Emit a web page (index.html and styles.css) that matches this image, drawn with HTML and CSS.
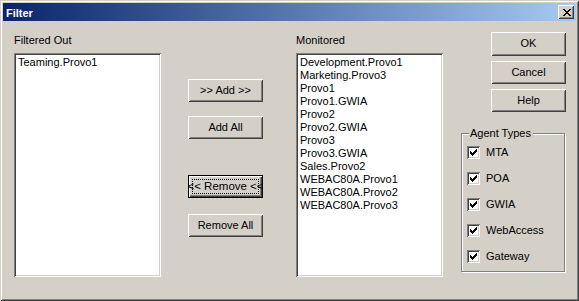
FILE: index.html
```html
<!DOCTYPE html>
<html>
<head>
<meta charset="utf-8">
<title>Filter</title>
<link rel="stylesheet" href="styles.css">
</head>
<body>
<div class="window">
  <div class="titlebar">
    <span class="title">Filter</span>
    <span class="close-btn">
      <svg width="8" height="7" viewBox="0 0 8 7" shape-rendering="crispEdges"><path fill="#000" d="M0 0h2v1h-2z M6 0h2v1h-2z M1 1h2v1h-2z M5 1h2v1h-2z M2 2h4v1h-4z M3 3h2v1h-2z M2 4h4v1h-4z M1 5h2v1h-2z M5 5h2v1h-2z M0 6h2v1h-2z M6 6h2v1h-2z"/></svg>
    </span>
  </div>
  <div class="content">
    <div class="col list-col">
      <div class="label">Filtered Out</div>
      <div class="listbox">
        <div class="item">Teaming.Provo1</div>
      </div>
    </div>
    <div class="col mid-col">
      <div class="btn btn-add"><span class="btn-text">&gt;&gt; Add &gt;&gt;</span></div>
      <div class="btn btn-addall"><span class="btn-text">Add All</span></div>
      <div class="btn btn-remove default"><span class="btn-text">&lt;&lt; Remove &lt;&lt;</span></div>
      <div class="btn btn-removeall"><span class="btn-text">Remove All</span></div>
    </div>
    <div class="col list-col list-col-2">
      <div class="label">Monitored</div>
      <div class="listbox">
        <div class="item">Development.Provo1</div>
        <div class="item">Marketing.Provo3</div>
        <div class="item">Provo1</div>
        <div class="item">Provo1.GWIA</div>
        <div class="item">Provo2</div>
        <div class="item">Provo2.GWIA</div>
        <div class="item">Provo3</div>
        <div class="item">Provo3.GWIA</div>
        <div class="item">Sales.Provo2</div>
        <div class="item">WEBAC80A.Provo1</div>
        <div class="item">WEBAC80A.Provo2</div>
        <div class="item">WEBAC80A.Provo3</div>
      </div>
    </div>
    <div class="col right-col">
      <div class="btn btn-ok"><span class="btn-text">OK</span></div>
      <div class="btn btn-cancel"><span class="btn-text">Cancel</span></div>
      <div class="btn btn-help"><span class="btn-text">Help</span></div>
      <div class="group">
        <span class="group-label">Agent Types</span>
        <div class="check-row"><span class="checkbox"><svg width="7" height="7" viewBox="0 0 7 7" shape-rendering="crispEdges"><path fill="#000" d="M0 2h1v3h-1z M1 3h1v3h-1z M2 4h1v3h-1z M3 3h1v3h-1z M4 2h1v3h-1z M5 1h1v3h-1z M6 0h1v3h-1z"/></svg></span><span class="check-label">MTA</span></div>
        <div class="check-row"><span class="checkbox"><svg width="7" height="7" viewBox="0 0 7 7" shape-rendering="crispEdges"><path fill="#000" d="M0 2h1v3h-1z M1 3h1v3h-1z M2 4h1v3h-1z M3 3h1v3h-1z M4 2h1v3h-1z M5 1h1v3h-1z M6 0h1v3h-1z"/></svg></span><span class="check-label">POA</span></div>
        <div class="check-row"><span class="checkbox"><svg width="7" height="7" viewBox="0 0 7 7" shape-rendering="crispEdges"><path fill="#000" d="M0 2h1v3h-1z M1 3h1v3h-1z M2 4h1v3h-1z M3 3h1v3h-1z M4 2h1v3h-1z M5 1h1v3h-1z M6 0h1v3h-1z"/></svg></span><span class="check-label">GWIA</span></div>
        <div class="check-row"><span class="checkbox"><svg width="7" height="7" viewBox="0 0 7 7" shape-rendering="crispEdges"><path fill="#000" d="M0 2h1v3h-1z M1 3h1v3h-1z M2 4h1v3h-1z M3 3h1v3h-1z M4 2h1v3h-1z M5 1h1v3h-1z M6 0h1v3h-1z"/></svg></span><span class="check-label">WebAccess</span></div>
        <div class="check-row"><span class="checkbox"><svg width="7" height="7" viewBox="0 0 7 7" shape-rendering="crispEdges"><path fill="#000" d="M0 2h1v3h-1z M1 3h1v3h-1z M2 4h1v3h-1z M3 3h1v3h-1z M4 2h1v3h-1z M5 1h1v3h-1z M6 0h1v3h-1z"/></svg></span><span class="check-label">Gateway</span></div>
      </div>
    </div>
  </div>
</div>
</body>
</html>
```
FILE: styles.css
```css
* { box-sizing: border-box; }
html, body {
  margin: 0;
  padding: 0;
  background: #d4d0c8;
}
body {
  font-family: "Liberation Sans", Arial, sans-serif;
  font-size: 11px;
  line-height: 13px;
  color: #000;
}
.window {
  width: 579px;
  height: 301px;
  padding: 3px;
  background: #d4d0c8;
  box-shadow: inset 1px 1px #d4d0c8, inset -1px -1px #404040, inset 2px 2px #ffffff, inset -2px -2px #808080;
  display: flex;
  flex-direction: column;
}
.titlebar {
  height: 18px;
  flex: 0 0 18px;
  background: linear-gradient(to right, #0a246a, #a6caf0);
  display: flex;
  align-items: center;
  justify-content: space-between;
  padding: 0 2px 0 3px;
}
.title {
  color: #fff;
  font-weight: bold;
  font-size: 11px;
  line-height: 18px;
  padding-top: 2px;
}
.close-btn {
  width: 16px;
  height: 14px;
  background: #d4d0c8;
  box-shadow: inset 1px 1px #ffffff, inset -1px -1px #404040, inset 2px 2px #d4d0c8, inset -2px -2px #808080;
  display: flex;
  align-items: center;
  justify-content: center;
  padding-left: 1px;
}
.close-btn svg { display: block; }
.content {
  flex: 1;
  display: flex;
  padding-left: 11px;
}
.col {
  display: flex;
  flex-direction: column;
}
.list-col {
  width: 147px;
  padding-top: 13px;
}
.list-col-2 {
  margin-left: 33px;
}
.label {
  height: 13px;
  white-space: nowrap;
}
.listbox {
  margin-top: 6px;
  height: 224px;
  background: #fff;
  box-shadow: inset 1px 1px #808080, inset -1px -1px #ffffff, inset 2px 2px #404040, inset -2px -2px #d4d0c8;
  padding: 3px 3px 0 4px;
}
.item {
  height: 13px;
  white-space: nowrap;
}
.mid-col {
  width: 75px;
  margin-left: 27px;
  padding-top: 58px;
}
.btn {
  position: relative;
  width: 75px;
  height: 23px;
  background: #d4d0c8;
  box-shadow: inset 1px 1px #ffffff, inset -1px -1px #404040, inset 2px 2px #d4d0c8, inset -2px -2px #808080;
  display: flex;
  align-items: center;
  justify-content: center;
  overflow: hidden;
  white-space: nowrap;
  padding-bottom: 1px;
}
.btn-text {
  flex: 0 0 auto;
}
.btn-addall { margin-top: 14px; }
.btn-remove { margin-top: 36px; }
.btn-removeall { margin-top: 16px; }
.btn.default {
  border: 1px solid #000;
  box-shadow: inset 1px 1px #ffffff, inset -1px -1px #404040, inset -2px -2px #808080;
  padding: 0 4px 1px;
  font-size: 11.5px;
}
.btn.default::after {
  content: "";
  position: absolute;
  left: 3px;
  top: 3px;
  right: 3px;
  bottom: 3px;
  border: 1px dotted #000;
}
.right-col {
  flex: 1;
  padding-top: 11px;
  padding-left: 48px;
}
.btn-ok { height: 24px; }
.btn-cancel { margin-top: 5px; }
.btn-help { margin-top: 5px; }
.group {
  position: relative;
  margin-top: 21px;
  margin-left: -30px;
  width: 104px;
  height: 139px;
  border: 1px solid #808080;
  box-shadow: inset 1px 1px #ffffff, 1px 1px #ffffff;
  padding: 12px 0 0 5px;
  display: flex;
  flex-direction: column;
  gap: 13px;
}
.group-label {
  position: absolute;
  left: 7px;
  top: -7px;
  padding: 0 2px 0 1px;
  background: #d4d0c8;
  line-height: 13px;
  white-space: nowrap;
}
.check-row {
  display: flex;
  align-items: center;
  height: 13px;
}
.checkbox {
  width: 13px;
  height: 13px;
  background: #fff;
  box-shadow: inset 1px 1px #808080, inset -1px -1px #ffffff, inset 2px 2px #404040, inset -2px -2px #d4d0c8;
  display: flex;
  align-items: center;
  justify-content: center;
}
.checkbox svg { display: block; }
.check-label {
  margin-left: 6px;
  white-space: nowrap;
}
```
